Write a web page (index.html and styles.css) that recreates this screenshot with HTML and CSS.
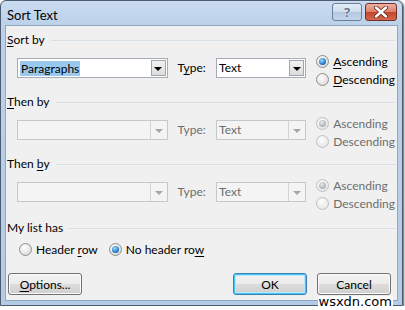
FILE: index.html
```html
<!DOCTYPE html>
<html>
<head>
<meta charset="utf-8">
<link rel="stylesheet" href="styles.css">
</head>
<body>
<div class="window">
  <div class="titlebar">
    <span class="title">Sort Text</span>
    <div class="caption">
      <div class="cbtn help"><span>?</span></div>
      <div class="cbtn close">
        <svg width="16" height="12" viewBox="0 0 16 12"><path d="M3 1.5 L13 10.5 M13 1.5 L3 10.5" stroke="#5a2a20" stroke-width="4" stroke-linecap="round"/><path d="M3 1.5 L13 10.5 M13 1.5 L3 10.5" stroke="#fff" stroke-width="2.4" stroke-linecap="round"/></svg>
      </div>
    </div>
  </div>
  <div class="client">
    <section class="group">
      <div class="ghead"><span><u>S</u>ort by</span><i class="rule"></i></div>
      <div class="grow">
        <div class="combo wide"><span class="val"><span class="sel">Paragraphs</span></span><span class="drop"><i class="tri"></i></span></div>
        <span class="tlabel">T<u>y</u>pe:</span>
        <div class="combo narrow"><span class="val">Text</span><span class="drop"><i class="tri"></i></span></div>
        <div class="radios">
          <div class="radio"><i class="dot on"></i><span><u>A</u>scending</span></div>
          <div class="radio"><i class="dot"></i><span><u>D</u>escending</span></div>
        </div>
      </div>
    </section>
    <section class="group">
      <div class="ghead"><span><u>T</u>hen by</span><i class="rule"></i></div>
      <div class="grow off">
        <div class="combo wide dis"><span class="val"></span><span class="drop"><i class="tri"></i></span></div>
        <span class="tlabel">Type:</span>
        <div class="combo narrow dis"><span class="val">Text</span><span class="drop"><i class="tri"></i></span></div>
        <div class="radios">
          <div class="radio"><i class="dot on"></i><span>Ascending</span></div>
          <div class="radio"><i class="dot"></i><span>Descending</span></div>
        </div>
      </div>
    </section>
    <section class="group">
      <div class="ghead"><span>Then <u>b</u>y</span><i class="rule"></i></div>
      <div class="grow off">
        <div class="combo wide dis"><span class="val"></span><span class="drop"><i class="tri"></i></span></div>
        <span class="tlabel">Type:</span>
        <div class="combo narrow dis"><span class="val">Text</span><span class="drop"><i class="tri"></i></span></div>
        <div class="radios">
          <div class="radio"><i class="dot on"></i><span>Ascending</span></div>
          <div class="radio"><i class="dot"></i><span>Descending</span></div>
        </div>
      </div>
    </section>
    <section class="listhas">
      <div class="ghead"><span>My list has</span><i class="rule"></i></div>
      <div class="hrow">
        <div class="radio"><i class="dot"></i><span>Header <u>r</u>ow</span></div>
        <div class="radio"><i class="dot on"></i><span>No header ro<u>w</u></span></div>
      </div>
    </section>
    <div class="buttons">
      <button class="btn"><u>O</u>ptions...</button>
      <span class="spacer"></span>
      <button class="btn default">OK</button>
      <button class="btn">Cancel</button>
    </div>
  </div>
  <span class="watermark">wsxdn.com</span>
</div>
</body>
</html>
```

FILE: styles.css
```css
* { box-sizing: border-box; }
html, body { margin: 0; padding: 0; background: #ffffff; }
body { font-family: Lato, "Noto Sans", sans-serif; font-size: 12px; color: #000; }
u { text-decoration: underline; text-underline-offset: 2px; }

.window {
  position: relative;
  width: 403px;
  height: 306px;
  border: 1px solid #4d5c6f;
  border-radius: 6px 6px 0 0;
  background: linear-gradient(#c8dbf1 0px, #bcd2ea 24px, #b4cbe6 100%);
  box-shadow: 1px 1px 2px rgba(0,0,0,0.65);
  padding: 0 4px 4px 4px;
  display: flex;
  flex-direction: column;
}

.titlebar {
  height: 24px;
  display: flex;
  align-items: center;
  justify-content: space-between;
}
.title { font-size: 13px; color: #000; padding-left: 2px; padding-top: 3px; }
.caption { display: flex; gap: 3px; align-self: flex-start; margin-top: 2px; margin-right: 1px; }
.cbtn {
  height: 18px;
  border-radius: 3px;
  border: 1px solid #6c7f97;
  display: flex; align-items: center; justify-content: center;
}
.cbtn.help {
  width: 30px;
  background: linear-gradient(#e4edf7 0%, #ccdbed 50%, #b3c7df 51%, #c2d5ea 100%);
}
.cbtn.help span { font-family: "Noto Sans", sans-serif; font-size: 13px; font-weight: bold; color: #66758a; text-shadow: 0 0 1px #fff, 0 0 1px #fff; line-height: 1; }
.cbtn.close {
  width: 32px;
  border-color: #6f2f24;
  background: linear-gradient(#eeb0a2 0%, #dd7d68 50%, #c4432a 51%, #d5664c 100%);
}

.client {
  flex: 1;
  background: #f0f0f0;
  border: 1px solid #93a8c0;
  padding: 6px 2px 0 1px;
  display: flex;
  flex-direction: column;
}

.ghead { display: flex; align-items: center; height: 16px; line-height: 16px; }
.ghead .rule { flex: 1; height: 1px; background: #d5dfe5; margin-left: 6px; margin-top: 1px; }

.group { height: 62px; }
.grow { display: flex; align-items: flex-start; margin-top: 4px; padding-left: 10px; }
.combo {
  margin-top: 6px;
  height: 20px;
  border: 1px solid #a5acb5;
  background: #fff;
  display: flex;
  align-items: stretch;
}
.combo.wide { width: 152px; }
.combo.narrow { width: 91px; }
.combo .val { flex: 1; padding: 1px 2px; line-height: 16px; display: flex; align-items: center; }
.combo .sel { background: #99c9ef; padding: 0 1px; line-height: 15px; }
.combo .drop {
  width: 15px;
  margin: 1px;
  border: 1px solid #a0a6ad;
  background: linear-gradient(#f2f2f2, #dcdcdc);
  display: flex; align-items: center; justify-content: center;
}
.tri { width: 0; height: 0; border-left: 4px solid transparent; border-right: 4px solid transparent; border-top: 4px solid #000; margin-top: 1px; }
.combo.dis { border-color: #c4c7cb; background: #f4f4f4; color: #6d6d6d; }
.combo.dis .drop { width: 17px; margin: 0; border: none; border-left: 1px solid #d2d4d7; background: transparent; }
.combo.dis .tri { border-top-color: #a6a6a6; }

.tlabel { width: 49px; padding-left: 10px; margin-top: 6px; line-height: 20px; }
.narrow + .radios { margin-left: 10px; }
.radios { display: flex; flex-direction: column; }
.radio { display: flex; align-items: center; height: 18px; gap: 4px; }
.dot {
  width: 13px; height: 13px; border-radius: 50%;
  border: 1px solid #8f8f8f;
  background: radial-gradient(circle at 40% 35%, #ffffff 0%, #e6e6e6 55%, #cfcfcf 100%);
  display: flex; align-items: center; justify-content: center;
}
.dot.on::after {
  content: ""; width: 7px; height: 7px; border-radius: 50%;
  background: radial-gradient(circle at 40% 35%, #a8dcff 0%, #2c84cc 55%, #0d4f8a 100%);
}
.off { color: #6d6d6d; }
.off .dot { border-color: #c0c0c0; background: radial-gradient(circle at 40% 35%, #fbfbfb 0%, #ececec 60%, #e0e0e0 100%); }
.off .dot.on::after { background: radial-gradient(circle at 40% 35%, #e8e8e8 0%, #b8b8b8 60%, #9a9a9a 100%); }

.listhas { margin-top: 2px; }
.hrow { display: flex; gap: 11px; margin-top: 4px; padding-left: 12px; }

.buttons { display: flex; align-items: center; margin-top: 15px; padding-left: 1px; padding-right: 4px; gap: 10px; }
.spacer { flex: 1; }
.btn {
  width: 74px; height: 22px;
  font-family: inherit; font-size: 12px; color: #000;
  border: 1px solid #707070;
  border-radius: 3px;
  background: linear-gradient(#f2f2f2 0%, #ebebeb 50%, #dddddd 51%, #cfcfcf 100%);
  box-shadow: inset 0 0 0 1px #fbfbfb;
  padding: 0;
}
.btn.default { box-shadow: inset 0 0 0 1px #48c7f4, inset 0 0 0 2px #b6e8fb; border-color: #3c7fb1; }

.watermark {
  position: absolute; right: 9px; bottom: -3px;
  font-family: "DejaVu Sans", sans-serif; font-size: 13px; line-height: 12px;
  color: #000; background: #ffffff; padding: 0 1px;
}
```
